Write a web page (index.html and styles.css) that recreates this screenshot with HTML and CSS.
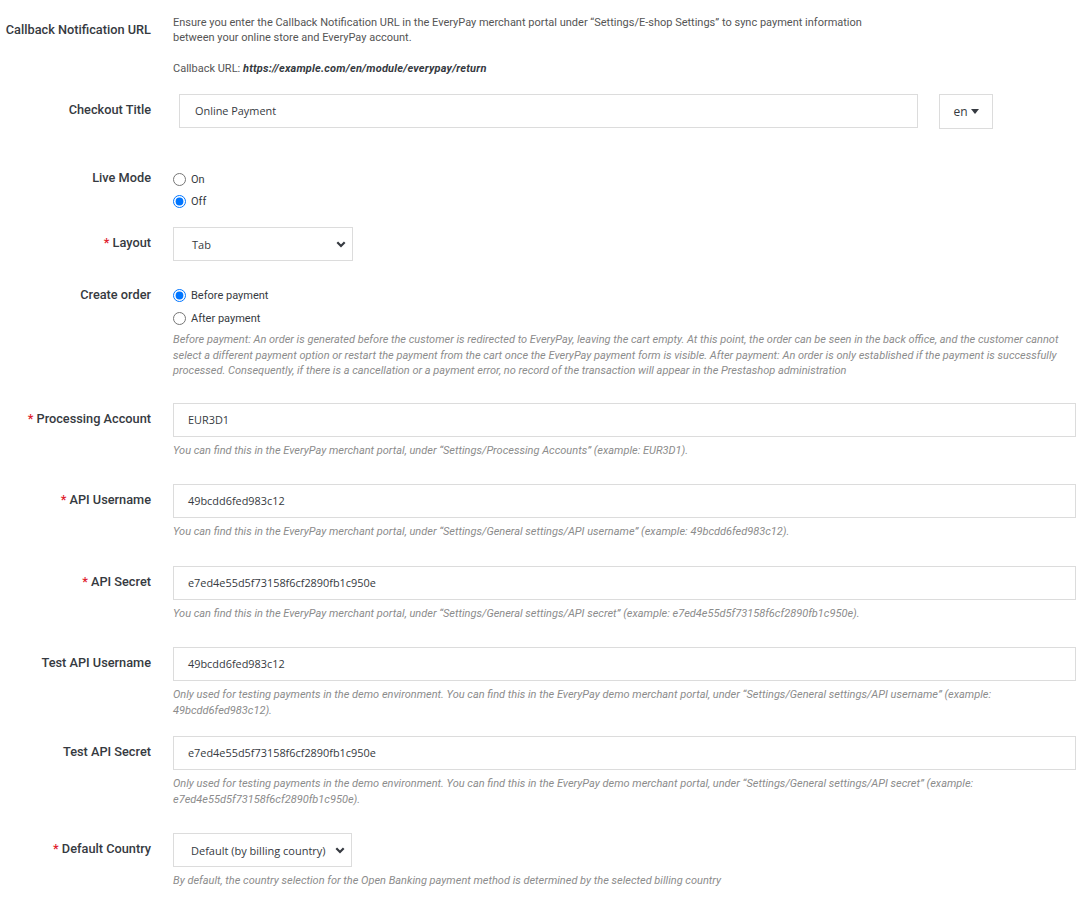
FILE: index.html
```html
<!DOCTYPE html>
<html lang="en">
<head>
<meta charset="utf-8">
<title>EveryPay settings</title>
<link rel="stylesheet" href="styles.css">
</head>
<body>
<form class="form">
  <div class="fg fg-callback">
    <div class="label">Callback Notification URL</div>
    <div class="content">
      <p class="desc">Ensure you enter the Callback Notification URL in the EveryPay merchant portal under “Settings/E-shop Settings” to sync payment information<br>between your online store and EveryPay account.</p>
      <p class="desc desc-url">Callback URL: <strong><em>https://example.com/en/module/everypay/return</em></strong></p>
    </div>
  </div>

  <div class="fg fg-title">
    <div class="label">Checkout Title</div>
    <div class="content translatable">
      <div class="input input-title">Online Payment</div>
      <div class="lang-btn">en <span class="caret"></span></div>
    </div>
  </div>

  <div class="fg fg-live">
    <div class="label">Live Mode</div>
    <div class="content radios">
      <label class="radio"><input type="radio" name="live"> On</label>
      <label class="radio"><input type="radio" name="live" checked> Off</label>
    </div>
  </div>

  <div class="fg fg-layout">
    <div class="label"><span class="req">*</span> Layout</div>
    <div class="content">
      <div class="select select-layout"><span>Tab</span><svg class="chev" width="10" height="7" viewBox="0 0 10 7"><polyline points="1.3,1.3 5,5 8.7,1.3" fill="none" stroke="#363a41" stroke-width="2.2"/></svg></div>
    </div>
  </div>

  <div class="fg fg-order">
    <div class="label">Create order</div>
    <div class="content radios">
      <label class="radio"><input type="radio" name="order" checked> Before payment</label>
      <label class="radio"><input type="radio" name="order"> After payment</label>
      <p class="help help-order">Before payment: An order is generated before the customer is redirected to EveryPay, leaving the cart empty. At this point, the order can be seen in the back office, and the customer cannot select a different payment option or restart the payment from the cart once the EveryPay payment form is visible. After payment: An order is only established if the payment is successfully processed. Consequently, if there is a cancellation or a payment error, no record of the transaction will appear in the Prestashop administration</p>
    </div>
  </div>

  <div class="fg">
    <div class="label"><span class="req">*</span> Processing Account</div>
    <div class="content">
      <div class="input">EUR3D1</div>
      <p class="help">You can find this in the EveryPay merchant portal, under “Settings/Processing Accounts” (example: EUR3D1).</p>
    </div>
  </div>

  <div class="fg">
    <div class="label"><span class="req">*</span> API Username</div>
    <div class="content">
      <div class="input">49bcdd6fed983c12</div>
      <p class="help">You can find this in the EveryPay merchant portal, under “Settings/General settings/API username” (example: 49bcdd6fed983c12).</p>
    </div>
  </div>

  <div class="fg">
    <div class="label"><span class="req">*</span> API Secret</div>
    <div class="content">
      <div class="input">e7ed4e55d5f73158f6cf2890fb1c950e</div>
      <p class="help">You can find this in the EveryPay merchant portal, under “Settings/General settings/API secret” (example: e7ed4e55d5f73158f6cf2890fb1c950e).</p>
    </div>
  </div>

  <div class="fg fg-testuser">
    <div class="label">Test API Username</div>
    <div class="content">
      <div class="input">49bcdd6fed983c12</div>
      <p class="help">Only used for testing payments in the demo environment. You can find this in the EveryPay demo merchant portal, under “Settings/General settings/API username” (example:<br>49bcdd6fed983c12).</p>
    </div>
  </div>

  <div class="fg fg-testsecret">
    <div class="label">Test API Secret</div>
    <div class="content">
      <div class="input">e7ed4e55d5f73158f6cf2890fb1c950e</div>
      <p class="help">Only used for testing payments in the demo environment. You can find this in the EveryPay demo merchant portal, under “Settings/General settings/API secret” (example:<br>e7ed4e55d5f73158f6cf2890fb1c950e).</p>
    </div>
  </div>

  <div class="fg">
    <div class="label"><span class="req">*</span> Default Country</div>
    <div class="content">
      <div class="select select-country"><span>Default (by billing country)</span><svg class="chev" width="10" height="7" viewBox="0 0 10 7"><polyline points="1.3,1.3 5,5 8.7,1.3" fill="none" stroke="#363a41" stroke-width="2.2"/></svg></div>
      <p class="help">By default, the country selection for the Open Banking payment method is determined by the selected billing country</p>
    </div>
  </div>
</form>
</body>
</html>
```
FILE: styles.css
```css
html, body {
  margin: 0;
  padding: 0;
  background: #fff;
}
body {
  font-family: Roboto, "Liberation Sans", sans-serif;
  color: #363a41;
}
.form {
  padding: 14px 7px 0 0;
}
.fg {
  display: grid;
  grid-template-columns: 151px 1fr;
  column-gap: 22px;
  margin-bottom: 26px;
}
.label {
  text-align: right;
  font-size: 12.75px;
  font-weight: 500;
  line-height: 18px;
  padding-top: 7px;
  color: #363a41;
  white-space: nowrap;
}
.req {
  color: #e0202c;
}
.content {
  min-width: 0;
}
p {
  margin: 0;
}
.desc {
  font-size: 11px;
  line-height: 15px;
  color: #555;
  padding-top: 1px;
}
.desc-url {
  margin-top: 15px;
}
.desc-url strong {
  color: #363a41;
  font-weight: 700;
  letter-spacing: 0.2px;
}
.fg-callback { margin-bottom: 18px; }
.fg-title { margin-bottom: 33px; }
.fg-live { margin-bottom: 15px; }
.fg-layout { margin-bottom: 18px; }
.fg-order { margin-bottom: 24px; }
.fg-testuser { margin-bottom: 18px; }
.fg-testsecret { margin-bottom: 26px; }

.translatable {
  display: flex;
  gap: 21px;
  padding-left: 6px;
  padding-right: 83px;
}
.input {
  height: 34px;
  box-sizing: border-box;
  border: 1px solid #dcdcdc;
  padding: 0 14px;
  font-family: "Open Sans", sans-serif;
  font-size: 10.9px;
  line-height: 32px;
  color: #363a41;
  background: #fff;
}
.input-title {
  flex: 1;
  padding-left: 15px;
}
.lang-btn {
  width: 54px;
  height: 35px;
  box-sizing: border-box;
  border: 1px solid #dcdcdc;
  display: flex;
  align-items: center;
  justify-content: center;
  gap: 3px;
  font-family: "Open Sans", sans-serif;
  font-size: 12px;
  color: #363a41;
}
.caret {
  width: 0;
  height: 0;
  border-left: 4px solid transparent;
  border-right: 4px solid transparent;
  border-top: 5px solid #363a41;
}
.radios {
  padding-top: 5px;
}
.fg-live .radios {
  padding-top: 6px;
}
.radio {
  display: flex;
  align-items: center;
  gap: 5px;
  height: 22px;
  font-size: 11px;
  color: #363a41;
}
.fg-order .radio {
  height: 23px;
}
.radio input {
  margin: 0;
  width: 13px;
  height: 13px;
}
.select {
  display: flex;
  align-items: center;
  justify-content: space-between;
  height: 34px;
  box-sizing: border-box;
  border: 1px solid #dcdcdc;
  padding: 0 6px 0 18px;
  font-family: "Open Sans", sans-serif;
  font-size: 11px;
  color: #363a41;
}
.select-layout { width: 180px; }
.select-country { width: 179px; padding-left: 17px; }
.chev { flex: none; }
.help {
  font-size: 11px;
  font-style: italic;
  line-height: 15.5px;
  color: #8c8c8c;
  margin-top: 6px;
}
.help-order {
  margin-top: 2px;
}
```
